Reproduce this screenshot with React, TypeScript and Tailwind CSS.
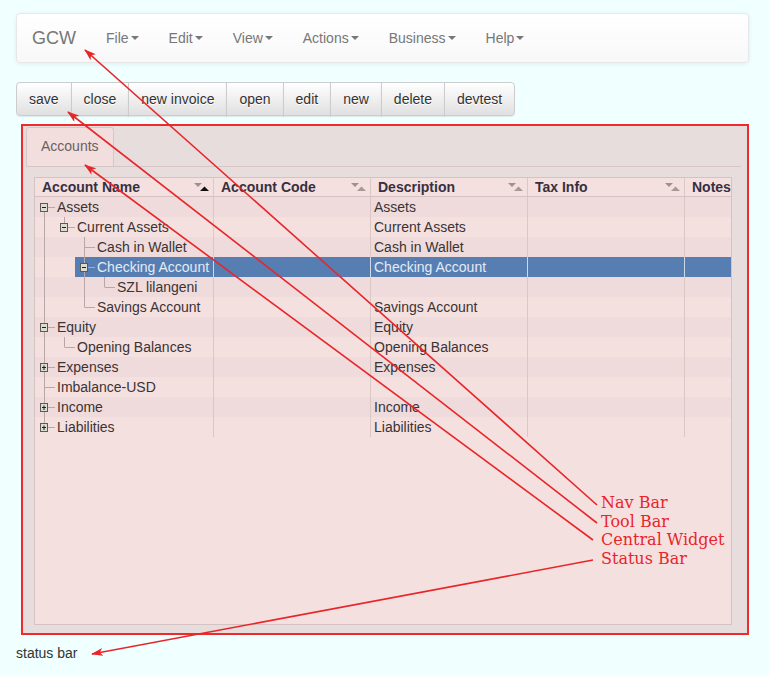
import React from 'react'

type Node = { name: string; desc?: string; open?: boolean; children?: Node[] }

type Flat = {
  node: Node
  depth: number
  guides: boolean[]
  first: boolean
  next: boolean
}

const tree: Node[] = [
  {
    name: 'Assets', desc: 'Assets', open: true, children: [
      {
        name: 'Current Assets', desc: 'Current Assets', open: true, children: [
          { name: 'Cash in Wallet', desc: 'Cash in Wallet' },
          { name: 'Checking Account', desc: 'Checking Account', open: true, children: [{ name: 'SZL lilangeni' }] },
          { name: 'Savings Account', desc: 'Savings Account' },
        ],
      },
    ],
  },
  { name: 'Equity', desc: 'Equity', open: true, children: [{ name: 'Opening Balances', desc: 'Opening Balances' }] },
  { name: 'Expenses', desc: 'Expenses', children: [{ name: '-' }] },
  { name: 'Imbalance-USD' },
  { name: 'Income', desc: 'Income', children: [{ name: '-' }] },
  { name: 'Liabilities', desc: 'Liabilities', children: [{ name: '-' }] },
]

function flatten(nodes: Node[], depth: number, guides: boolean[], out: Flat[]) {
  nodes.forEach((n, i) => {
    const next = i < nodes.length - 1
    out.push({ node: n, depth, guides, first: depth === 0 && i === 0, next })
    if (n.open && n.children) flatten(n.children, depth + 1, [...guides, next], out)
  })
  return out
}

const rows = flatten(tree, 0, [], [])
const LINE = '#b9a7a7'

function Guide({ on }: { on: boolean }) {
  return (
    <svg width="20" height="20" className="shrink-0">
      {on && <line x1="9.5" y1="0" x2="9.5" y2="20" stroke={LINE} />}
    </svg>
  )
}

function Branch({ r }: { r: Flat }) {
  const kids = !!r.node.children
  return (
    <svg width="20" height="20" className="shrink-0">
      {!r.first && <line x1="9.5" y1="0" x2="9.5" y2="10" stroke={LINE} />}
      {r.next && <line x1="9.5" y1="10" x2="9.5" y2="20" stroke={LINE} />}
      <line x1="9.5" y1="10.5" x2="20" y2="10.5" stroke={LINE} />
      {kids && (
        <g>
          <rect x="5.5" y="6.5" width="7" height="8" fill="#dcdcd2" stroke="#5e5a52" />
          <line x1="7" y1="10.5" x2="11" y2="10.5" stroke="#1e1e1e" />
          {!r.node.open && <line x1="9" y1="8.5" x2="9" y2="13" stroke="#1e1e1e" />}
        </g>
      )}
    </svg>
  )
}

function SortIcon({ active }: { active?: boolean }) {
  return (
    <svg width="16" height="8" className="shrink-0">
      <path d="M0 0 H8 L4 4 Z" fill="#a08f8f" />
      <path d="M6 8 H15 L10.5 3.5 Z" fill={active ? '#111111' : '#a89898'} />
    </svg>
  )
}

function Row({ r, i }: { r: Flat; i: number }) {
  const sel = r.node.name === 'Checking Account'
  const stripe = i % 2 === 0 ? 'bg-[#efdbdb]' : 'bg-[#f5e0e0]'
  const hl = sel ? 'bg-[#567eb2] text-[#e4ebf5]' : ''
  const sep = sel ? 'border-[#cfd8e6]' : 'border-[#dcc7c7]'
  return (
    <div className={`flex h-5 leading-5 ${stripe}`}>
      <div className={`flex w-[179px] shrink-0 border-r ${sep}`}>
        {r.guides.map((g, k) => (
          <Guide key={k} on={g} />
        ))}
        <div className={`flex min-w-0 flex-1 ${hl}`}>
          <Branch r={r} />
          <span className="whitespace-nowrap pl-[2px]">{r.node.name}</span>
        </div>
      </div>
      <div className={`w-[157px] shrink-0 border-r ${sep} ${hl}`} />
      <div className={`w-[157px] shrink-0 border-r pl-[3px] whitespace-nowrap ${sep} ${hl}`}>{r.node.desc}</div>
      <div className={`w-[157px] shrink-0 border-r ${sep} ${hl}`} />
      <div className={`flex-1 ${hl}`} />
    </div>
  )
}

function Head({ label, w, active, icon = true }: { label: string; w: string; active?: boolean; icon?: boolean }) {
  return (
    <div className={`flex items-center justify-between overflow-hidden whitespace-nowrap border-r border-[#dcc7c7] pl-[7px] pr-[3px] ${w}`}>
      <span>{label}</span>
      {icon && <SortIcon active={active} />}
    </div>
  )
}

const menus = ['File', 'Edit', 'View', 'Actions', 'Business', 'Help']
const tools = ['save', 'close', 'new invoice', 'open', 'edit', 'new', 'delete', 'devtest']

export default function App() {
  return (
    <div className="relative h-[676px] w-[769px] overflow-hidden bg-[#f0ffff] pl-4 pr-5 pt-[13px] font-['Liberation_Sans',Arial,sans-serif] text-[14px] text-[#333]">
      {/* Nav Bar */}
      <nav className="flex h-[50px] items-center rounded border border-[#e7e7e7] bg-gradient-to-b from-white to-[#f8f8f8] shadow-[0_1px_5px_rgba(0,0,0,0.075)]">
        <span className="px-[15px] text-[18px] text-[#777]">GCW</span>
        {menus.map(m => (
          <span key={m} className="flex items-center px-[15px] text-[#777]">
            {m}
            <span className="ml-[2px] h-0 w-0 border-x-4 border-t-4 border-x-transparent border-t-[#777]" />
          </span>
        ))}
      </nav>

      {/* Tool Bar */}
      <div className="mt-[19px] flex">
        {tools.map((t, i) => (
          <button
            key={t}
            className={`h-[34px] border border-[#ccc] bg-gradient-to-b from-white to-[#e0e0e0] px-3 text-[#333] [text-shadow:0_1px_0_#fff] shadow-[inset_0_1px_0_rgba(255,255,255,0.15),0_1px_1px_rgba(0,0,0,0.075)] ${i === 0 ? 'rounded-l' : '-ml-px'} ${i === tools.length - 1 ? 'rounded-r' : ''}`}
          >
            {t}
          </button>
        ))}
      </div>

      {/* Central Widget */}
      <div className="ml-[5px] mt-2 flex h-[511px] flex-col border-2 border-[#ee2a2a] bg-[#e8dddd]">
        <div className="ml-[3px] mt-px flex">
          <div className="flex h-[39px] w-[88px] items-center rounded-t-[3px] border border-b-0 border-[#d8c6c6] bg-[#f3dede] pb-[2px] pl-[14px] text-[#6a6060]">
            Accounts
          </div>
        </div>
        <div className="ml-[3px] mr-[6px] flex flex-1 flex-col border-t border-[#d8c6c6] pb-[8px] pl-2 pr-[9px] pt-[10px]">
          <div className="flex flex-1 flex-col overflow-hidden border border-[#d6c2c2] bg-[#f5e0e0] text-[#3b3333]">
            <div className="flex h-[19px] shrink-0 border-b border-[#d6c2c2] font-bold text-[#373040]">
              <Head label="Account Name" w="w-[179px] shrink-0" active />
              <Head label="Account Code" w="w-[157px] shrink-0" />
              <Head label="Description" w="w-[157px] shrink-0" />
              <Head label="Tax Info" w="w-[157px] shrink-0" />
              <Head label="Notes" w="flex-1 border-r-0" icon={false} />
            </div>
            {rows.map((r, i) => (
              <Row key={r.node.name} r={r} i={i} />
            ))}
          </div>
        </div>
      </div>

      {/* Status Bar */}
      <div className="mt-[8px] leading-5">status bar</div>

      {/* Annotations */}
      <svg width="769" height="676" className="pointer-events-none absolute left-0 top-0">
        <defs>
          <marker id="ah" viewBox="0 0 12 8" refX="11" refY="4" markerWidth="12" markerHeight="8" markerUnits="userSpaceOnUse" orient="auto">
            <path d="M0 0 L12 4 L0 8 L3 4 Z" fill="#e8262a" />
          </marker>
        </defs>
        <g stroke="#e8262a" strokeWidth="1.6" fill="none">
          <line x1="597" y1="505" x2="85" y2="50" markerEnd="url(#ah)" />
          <line x1="597" y1="523" x2="68" y2="112" markerEnd="url(#ah)" />
          <line x1="593" y1="540" x2="85" y2="165" markerEnd="url(#ah)" />
          <line x1="593" y1="560" x2="92" y2="654" markerEnd="url(#ah)" />
        </g>
      </svg>
      <div className="absolute left-[601px] top-[494px] font-['DejaVu_Serif',serif] text-[16px] leading-[18.7px] text-[#e8262a]">
        <div>Nav Bar</div>
        <div>Tool Bar</div>
        <div>Central Widget</div>
        <div>Status Bar</div>
      </div>
    </div>
  )
}
